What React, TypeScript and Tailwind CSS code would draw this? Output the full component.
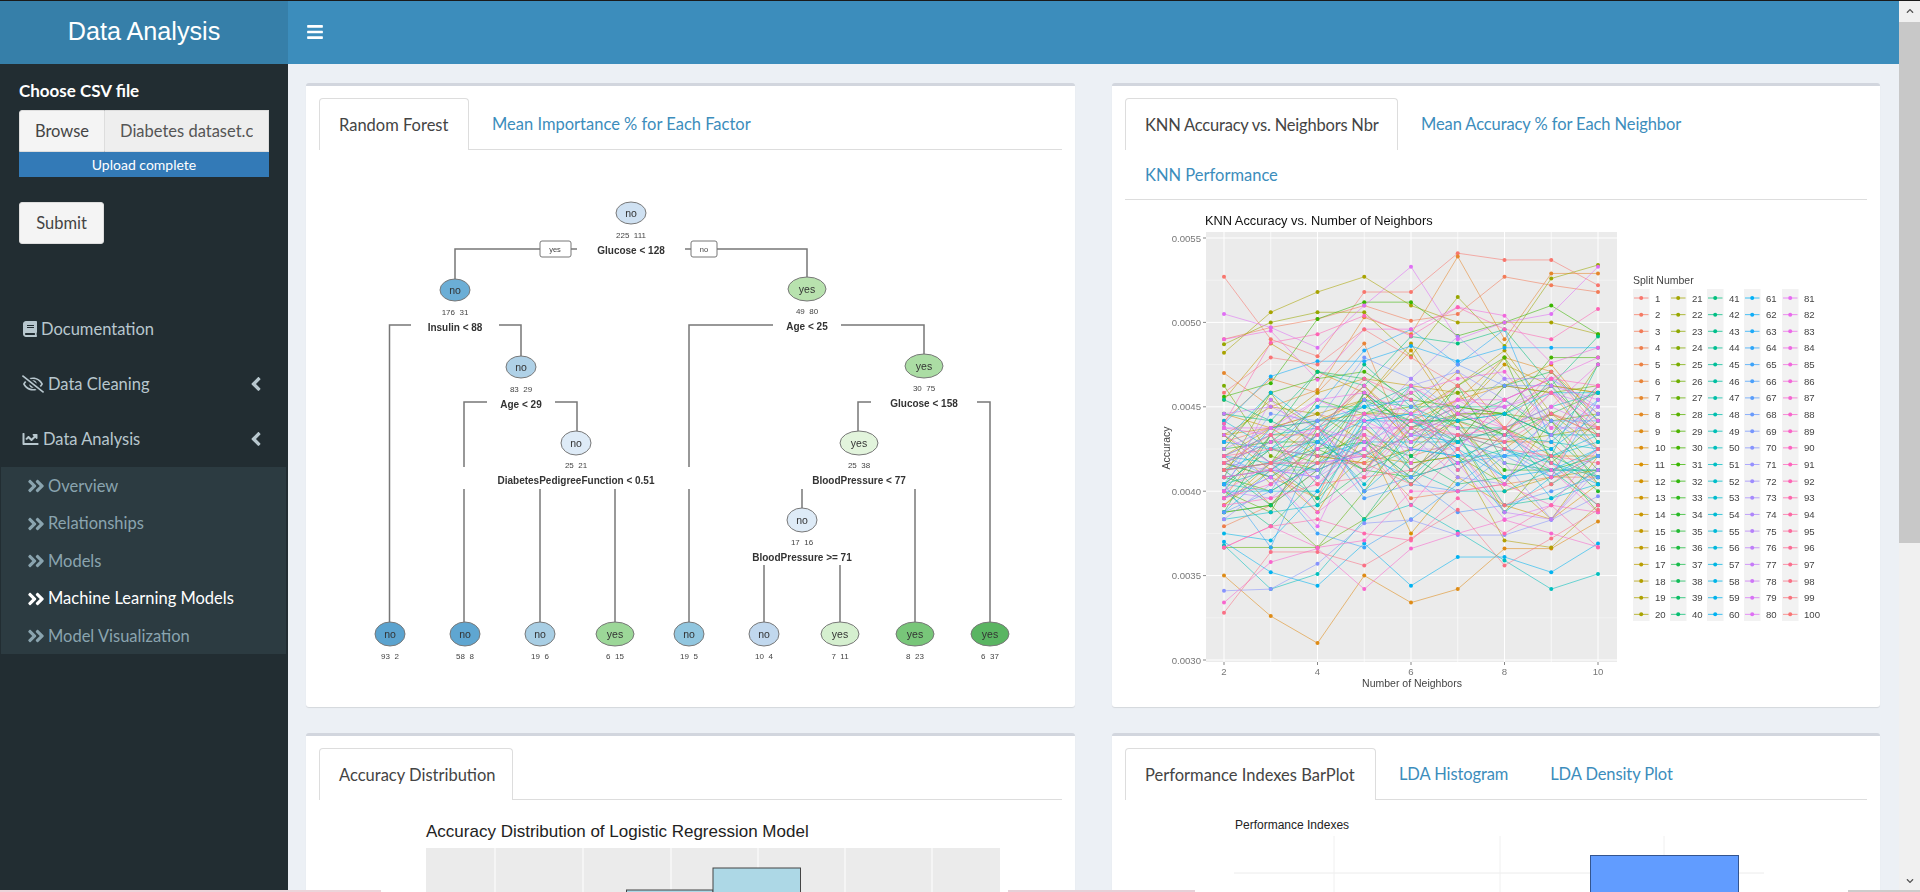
import { FaAngleDoubleRight, FaAngleLeft, FaBars, FaBook, FaChartLine, FaChevronDown, FaChevronUp, FaRegEyeSlash } from "react-icons/fa";

const ARIAL = "'Liberation Sans', Arial, sans-serif";

// ---------- decision tree ----------
const treeLines = [
  "M455 279V249H540", "M571 249H577", "M685 249H691", "M717 249H807V277",
  "M411 325H389.5V622", "M499 325H521V356",
  "M487 402H464V467", "M464 489V622", "M555 402H577V432",
  "M773 325H689V467", "M689 489V622", "M841 325H924V354",
  "M871 402H858V431", "M977 402H990V622",
  "M540 489V622", "M615 489V622",
  "M802 489V508", "M915 489V622",
  "M764 565V622", "M840 565V622",
];

const treeNodes = [
  { x: 631, y: 213, rx: 15, ry: 11, fill: "#cfe1f2", label: "no", counts: "225  111", split: "Glucose < 128" },
  { x: 455, y: 290, rx: 15, ry: 11, fill: "#6baed6", label: "no", counts: "176  31", split: "Insulin < 88" },
  { x: 807, y: 289, rx: 19, ry: 12, fill: "#b8e2ae", label: "yes", counts: "49  80", split: "Age < 25" },
  { x: 521, y: 367, rx: 15, ry: 11, fill: "#afd1e7", label: "no", counts: "83  29", split: "Age < 29" },
  { x: 924, y: 366, rx: 19, ry: 12, fill: "#abdda4", label: "yes", counts: "30  75", split: "Glucose < 158" },
  { x: 576, y: 443, rx: 15, ry: 12, fill: "#deebf7", label: "no", counts: "25  21", split: "DiabetesPedigreeFunction < 0.51" },
  { x: 859, y: 443, rx: 19, ry: 12, fill: "#e2f4dc", label: "yes", counts: "25  38", split: "BloodPressure < 77" },
  { x: 802, y: 520, rx: 15, ry: 12, fill: "#deebf7", label: "no", counts: "17  16", split: "BloodPressure >= 71" },
  { x: 390, y: 634, rx: 15, ry: 12, fill: "#5ba3cf", label: "no", counts: "93  2" },
  { x: 465, y: 634, rx: 15, ry: 12, fill: "#5fa6d1", label: "no", counts: "58  8" },
  { x: 540, y: 634, rx: 15, ry: 12, fill: "#a8cee4", label: "no", counts: "19  6" },
  { x: 615, y: 634, rx: 19, ry: 12, fill: "#9cd798", label: "yes", counts: "6  15" },
  { x: 689, y: 634, rx: 15, ry: 12, fill: "#91c6df", label: "no", counts: "19  5" },
  { x: 764, y: 634, rx: 15, ry: 12, fill: "#c1d8ee", label: "no", counts: "10  4" },
  { x: 840, y: 634, rx: 19, ry: 12, fill: "#d5efcf", label: "yes", counts: "7  11" },
  { x: 915, y: 634, rx: 19, ry: 12, fill: "#78c679", label: "yes", counts: "8  23" },
  { x: 990, y: 634, rx: 19, ry: 12, fill: "#5ab562", label: "yes", counts: "6  37" },
];

const TreePlot = () => (
  <svg viewBox="319 150 743 550" className="block h-[550px] w-[743px] blur-[0.4px]" fontFamily={ARIAL}>
    {treeLines.map((d) => (
      <path key={d} d={d} fill="none" stroke="#777" strokeWidth="1.5" />
    ))}
    <rect x="540" y="241" width="31" height="16" rx="2" fill="#fff" stroke="#777" />
    <text x="555" y="252" fontSize="7.5" fill="#444" textAnchor="middle">yes</text>
    <rect x="691" y="241" width="26" height="16" rx="2" fill="#fff" stroke="#777" />
    <text x="704" y="252" fontSize="7.5" fill="#444" textAnchor="middle">no</text>
    {treeNodes.map((n) => (
      <g key={n.x + "-" + n.y} textAnchor="middle">
        <ellipse cx={n.x} cy={n.y} rx={n.rx} ry={n.ry} fill={n.fill} stroke="#777" />
        <text x={n.x} y={n.y + 3.5} fontSize="10.5" fill="#333">{n.label}</text>
        <text x={n.x} y={n.y + 25} fontSize="8" fill="#444" xmlSpace="preserve">{n.counts}</text>
        {n.split && <text x={n.x} y={n.y + 40.5} fontSize="10" fontWeight="700" fill="#333">{n.split}</text>}
      </g>
    ))}
  </svg>
);

// ---------- KNN chart ----------
const STOPS = ["#F8766D", "#D89000", "#A3A500", "#39B600", "#00BF7D", "#00BFC4", "#00B0F6", "#9590FF", "#E76BF3", "#FF62BC", "#F8766D"];

const splitColor = (i: number) => {
  const t = ((i - 1) / 100) * 10;
  const lo = Math.floor(t);
  const f = t - lo;
  const a = STOPS[lo];
  const b = STOPS[lo + 1];
  const ch = (s: number) => {
    const p = parseInt(a.slice(s, s + 2), 16);
    const q = parseInt(b.slice(s, s + 2), 16);
    return Math.round(p + (q - p) * f);
  };
  return `rgb(${ch(1)},${ch(3)},${ch(5)})`;
};

// lines that stand out at the edges of the cloud, read off the picture
const knownLines: Record<number, number[]> = {
  1: [5.27, 4.9, 4.8, 5.18, 5.18, 5.41, 5.37, 5.37, 5.22],
  3: [4.9, 4.97, 5.02, 5.1, 5.01, 5.05, 5.27, 5.22, 5.18],
  7: [4.7, 4.5, 4.6, 5.03, 4.93, 5.39, 4.9, 5.29, 5.29],
  9: [3.5, 3.26, 3.1, 3.5, 3.34, 3.42, 3.66, 3.66, 3.82],
  20: [4.82, 5.06, 5.18, 5.27, 5.1, 5, 5, 5, 4.93],
  22: [4.87, 5, 5.06, 5.06, 4.8, 5.15, 4.86, 5.26, 5.34],
  31: [4.56, 4.64, 5.02, 5.12, 5.12, 4.92, 5, 5.1, 4.93],
  50: [3.68, 3.42, 3.51, 3.83, 3.92, 3.76, 3.59, 3.42, 3.51],
  60: [3.7, 3.52, 3.44, 3.69, 3.44, 3.61, 3.61, 3.52, 3.69],
  62: [4.4, 4.68, 4.77, 4.77, 4.86, 4.77, 4.85, 4.85, 4.85],
  70: [3.41, 3.42, 3.57, 3.81, 3.83, 3.74, 3.74, 3.83, 3.97],
  80: [5.05, 4.97, 4.85, 5.1, 5.33, 4.9, 5, 5.05, 5.33],
  85: [4.9, 4.95, 4.66, 4.96, 4.96, 5.09, 5.04, 4.76, 4.85],
  88: [3.34, 3.58, 3.66, 3.42, 3.66, 3.75, 3.83, 3.75, 3.67],
  92: [4.4, 4.88, 4.93, 5.04, 4.92, 5.09, 4.96, 4.9, 5.08],
  98: [3.28, 3.64, 3.64, 3.56, 3.72, 3.89, 3.56, 3.72, 3.89],
};

const seeded = (a: number) => () => {
  a = (a + 0x6d2b79f5) | 0;
  let t = Math.imul(a ^ (a >>> 15), 1 | a);
  t = (t + Math.imul(t ^ (t >>> 7), 61 | t)) ^ t;
  return ((t ^ (t >>> 14)) >>> 0) / 4294967296;
};

const rnd = seeded(41);
const MEANS = [4.12, 4.2, 4.24, 4.34, 4.34, 4.36, 4.32, 4.34, 4.3];
const gauss = () => (rnd() + rnd() + rnd() + rnd() - 2) * 1.73;

const knnLines = Array.from({ length: 100 }, (_, n) => {
  const split = n + 1;
  const offset = gauss() * 0.17;
  let drift = 0;
  const values =
    knownLines[split] ??
    MEANS.map((m) => {
      drift = drift * 0.45 + gauss() * 0.19;
      const v = m + offset + drift;
      return Math.round(Math.min(4.95, Math.max(3.68, v)) * 24) / 24;
    });
  return { split, color: splitColor(split), values };
});

const knnX = (k: number) => 1224 + k * 46.75;
const knnY = (v: number) => 660 - (v - 3) * 168.8;

const KnnPlot = () => (
  <svg viewBox="1125 200 743 500" className="block h-[500px] w-[743px] blur-[0.35px]" fontFamily={ARIAL}>
    <text x="1205" y="225" fontSize="12.8" fill="#111">KNN Accuracy vs. Number of Neighbors</text>
    <rect x="1206" y="232" width="411" height="430" fill="#ebebeb" />
    {[3.25, 3.75, 4.25, 4.75, 5.25].map((v) => (
      <line key={v} x1="1206" x2="1617" y1={knnY(v)} y2={knnY(v)} stroke="#f6f6f6" strokeWidth="0.7" />
    ))}
    {[3, 3.5, 4, 4.5, 5, 5.5].map((v) => (
      <g key={v}>
        <line x1="1206" x2="1617" y1={knnY(v)} y2={knnY(v)} stroke="#fff" />
        <line x1="1203" x2="1206" y1={knnY(v)} y2={knnY(v)} stroke="#555" strokeWidth="0.7" />
        <text x="1201" y={knnY(v) + 3.5} fontSize="9.6" fill="#777" textAnchor="end">{(v / 1000).toFixed(4)}</text>
      </g>
    ))}
    {[0, 1, 2, 3, 4, 5, 6, 7, 8].map((k) => (
      <line key={k} x1={knnX(k)} x2={knnX(k)} y1="232" y2="662" stroke="#fff" strokeWidth={k % 2 ? 0.7 : 1} />
    ))}
    {[2, 4, 6, 8, 10].map((k) => (
      <g key={k}>
        <line x1={knnX(k - 2)} x2={knnX(k - 2)} y1="662" y2="665" stroke="#555" strokeWidth="0.7" />
        <text x={knnX(k - 2)} y="675" fontSize="9.6" fill="#777" textAnchor="middle">{k}</text>
      </g>
    ))}
    {knnLines.map((l) => (
      <g key={l.split}>
        <polyline
          points={l.values.map((v, k) => `${knnX(k)},${knnY(v)}`).join(" ")}
          fill="none"
          stroke={l.color}
          strokeWidth="0.8"
          strokeOpacity="0.7"
        />
        {l.values.map((v, k) => (
          <circle key={k} cx={knnX(k)} cy={knnY(v)} r="2" fill={l.color} />
        ))}
      </g>
    ))}
    <text x="1412" y="687" fontSize="10.5" fill="#444" textAnchor="middle">Number of Neighbors</text>
    <text transform="translate(1170 448) rotate(-90)" fontSize="10.5" fill="#444" textAnchor="middle">Accuracy</text>
    <text x="1633" y="284" fontSize="10.5" fill="#444">Split Number</text>
    {[0, 1, 2, 3, 4].map((c) => {
      const keyX = [1633, 1670, 1707, 1744, 1782][c];
      return (
        <g key={c}>
          <rect x={keyX} y="289" width="16.5" height="332" fill="#f2f2f2" />
          {Array.from({ length: 20 }, (_, r) => {
            const split = c * 20 + r + 1;
            const y = 298 + r * 16.65;
            return (
              <g key={split}>
                <line x1={keyX + 1} x2={keyX + 15.5} y1={y} y2={y} stroke={splitColor(split)} strokeOpacity="0.75" />
                <circle cx={keyX + 8.2} cy={y} r="2" fill={splitColor(split)} />
                <text x={keyX + 22} y={y + 3.5} fontSize="9.6" fill="#444">{split}</text>
              </g>
            );
          })}
        </g>
      );
    })}
  </svg>
);

// ---------- bottom row plots ----------
const HistPlot = () => (
  <svg viewBox="319 800 743 92" className="block h-[92px] w-[743px]" fontFamily={ARIAL}>
    <text x="426" y="837" fontSize="17" fill="#222">Accuracy Distribution of Logistic Regression Model</text>
    <rect x="426" y="848" width="574" height="44" fill="#ebebeb" />
    {[495, 583, 671, 758, 845, 932].map((x) => (
      <line key={x} x1={x} x2={x} y1="848" y2="892" stroke="#fff" />
    ))}
    <rect x="626.5" y="890" width="86.5" height="10" fill="#add8e6" stroke="#444" />
    <rect x="713" y="868" width="87.5" height="30" fill="#add8e6" stroke="#444" />
  </svg>
);

const BarPlot = () => (
  <svg viewBox="1125 800 743 92" className="block h-[92px] w-[743px]" fontFamily={ARIAL}>
    <text x="1235" y="829" fontSize="12" fill="#222">Performance Indexes</text>
    <line x1="1234" x2="1764" y1="873" y2="873" stroke="#ececec" />
    {[1334, 1500, 1664].map((x) => (
      <line key={x} x1={x} x2={x} y1="836" y2="892" stroke="#f0f0f0" />
    ))}
    <rect x="1590.5" y="855.5" width="148" height="50" fill="#619cff" stroke="#34558f" />
  </svg>
);

// ---------- page chrome ----------
const Tab = ({ label, activeWidth, low, tight }: { label: string; activeWidth?: string; low?: boolean; tight?: boolean }) =>
  activeWidth ? (
    <span className={`-mb-px mr-[3px] flex h-[52px] items-center rounded-t-[4px] border border-b-0 border-[#ddd] bg-white pt-[2px] pl-[19px] whitespace-nowrap text-[#444] ${activeWidth} ${tight ? "tracking-[-0.2px]" : ""}`}>
      {label}
    </span>
  ) : (
    <span className={`mr-[2px] flex items-center px-5 pt-[2px] text-[#3c8dbc] ${low ? "h-[50px]" : "h-[51px]"} ${tight ? "tracking-[-0.1px]" : ""}`}>{label}</span>
  );

const Card = ({ children, height }: { children: React.ReactNode; height: string }) => (
  <section className={`rounded-[3px] border-t-[3px] border-[#d2d6de] bg-white px-[13px] pt-3 shadow-[0_1px_1px_rgba(0,0,0,0.1)] ${height}`}>
    {children}
  </section>
);

const menuItems = [
  { label: "Overview" },
  { label: "Relationships" },
  { label: "Models" },
  { label: "Machine Learning Models", active: true },
  { label: "Model Visualization" },
];

const Sidebar = () => (
  <aside className="flex w-[288px] shrink-0 flex-col bg-[#222d32] text-[#b8c7ce]">
    <div className="flex h-[64px] items-center justify-center bg-[#367fa9] text-[25.2px] text-white [font-family:'Liberation_Sans',sans-serif]">
      Data Analysis
    </div>
    <div className="px-[19px] pt-[17px]">
      <div className="h-[29px] text-[17px] leading-5 font-bold text-white">Choose CSV file</div>
      <div className="flex h-[42px] w-[250px] text-[#444]">
        <span className="flex w-[86px] items-center justify-center rounded-tl-[3px] border border-[#ddd] bg-[#f4f4f4]">Browse</span>
        <span className="flex flex-1 items-center overflow-hidden border-y border-r border-[#ddd] bg-[#eee] pl-[15px] whitespace-nowrap text-[#555]">
          <span className="w-[133px] overflow-hidden">Diabetes dataset.csv</span>
        </span>
      </div>
      <div className="flex h-[25px] w-[250px] items-center justify-center bg-[#337ab7] text-[14px] text-white">Upload complete</div>
      <button className="mt-[25px] flex h-[42px] w-[85px] items-center justify-center rounded-[3px] border border-[#ddd] bg-[#f4f4f4] text-[#444]">
        Submit
      </button>
    </div>
    <nav className="pt-[57.5px]">
      <div className="flex h-[55px] items-center pl-[22px]">
        <FaBook className="mr-[3px] h-[16px] w-[16px]" />
        Documentation
      </div>
      <div className="flex h-[55px] items-center pl-[22px]">
        <FaRegEyeSlash className="mr-[4px] h-[18px] w-[22px]" />
        Data Cleaning
        <FaAngleLeft className="mr-[26px] ml-auto h-[22px] w-[12px]" />
      </div>
      <div className="flex h-[55px] items-center pl-[22px]">
        <FaChartLine className="mr-[4px] h-[16px] w-[17px]" />
        Data Analysis
        <FaAngleLeft className="mr-[26px] ml-auto h-[22px] w-[12px]" />
      </div>
      <ul className="mx-px w-[285px] bg-[#2c3b41]">
        {menuItems.map((item) => (
          <li key={item.label} className={`flex h-[37.5px] items-center pt-[2px] pl-[26px] ${item.active ? "text-white" : "text-[#8aa4af]"}`}>
            <FaAngleDoubleRight className="mr-[3px] h-[20px] w-[18px]" />
            {item.label}
          </li>
        ))}
      </ul>
    </nav>
  </aside>
);

const Scrollbar = () => (
  <div className="flex w-[21px] shrink-0 flex-col bg-[#f0f0f0]">
    <div className="flex h-[22px] items-center justify-center text-[#555]">
      <FaChevronUp className="h-[8px] w-[10px]" />
    </div>
    <div className="h-[521px] bg-[#c8c8c8]" />
    <div className="flex-1" />
    <div className="flex h-[22px] items-center justify-center text-[#555]">
      <FaChevronDown className="h-[8px] w-[10px]" />
    </div>
  </div>
);

const App = () => {
  return (
    <div className="relative flex h-[892px] overflow-hidden bg-[#ecf0f5] text-[16.5px] [font-family:Lato,sans-serif]">
      <Sidebar />
      <main className="flex min-w-0 flex-1 flex-col">
        <header className="flex h-[64px] shrink-0 items-center bg-[#3c8dbc] pl-[18px] text-white">
          <FaBars className="h-[18px] w-[18px]" />
        </header>
        <div className="grid grid-cols-[769px_768px] gap-x-[37px] gap-y-[26px] pt-[19px] pl-[18px]">
          <Card height="h-[624px]">
            <div className="flex border-b border-[#ddd]">
              <Tab label="Random Forest" activeWidth="w-[150px]" />
              <Tab label="Mean Importance % for Each Factor" />
            </div>
            <TreePlot />
          </Card>
          <Card height="h-[624px]">
            <div className="flex flex-wrap border-b border-[#ddd]">
              <Tab label="KNN Accuracy vs. Neighbors Nbr" activeWidth="w-[273px]" tight />
              <Tab label="Mean Accuracy % for Each Neighbor" tight />
              <div className="h-0 basis-full" />
              <Tab label="KNN Performance" low />
            </div>
            <KnnPlot />
          </Card>
          <Card height="h-[300px]">
            <div className="flex border-b border-[#ddd]">
              <Tab label="Accuracy Distribution" activeWidth="w-[194px]" />
            </div>
            <HistPlot />
          </Card>
          <Card height="h-[300px]">
            <div className="flex border-b border-[#ddd]">
              <Tab label="Performance Indexes BarPlot" activeWidth="w-[251px]" />
              <Tab label="LDA Histogram" tight />
              <Tab label="LDA Density Plot" tight />
            </div>
            <BarPlot />
          </Card>
        </div>
      </main>
      <Scrollbar />
      <div className="absolute top-0 left-0 h-px w-full bg-[#1a1a1a]" />
      <div className="absolute bottom-0 left-0 h-[2px] w-[381px] bg-[#ecd4da]" />
      <div className="absolute bottom-0 left-[1008px] h-[2px] w-[187px] bg-[#e6d0d8]" />
      <div className="absolute right-0 bottom-0 h-[2px] w-[72px] bg-[#cccccc]" />
    </div>
  );
};

export default App;
